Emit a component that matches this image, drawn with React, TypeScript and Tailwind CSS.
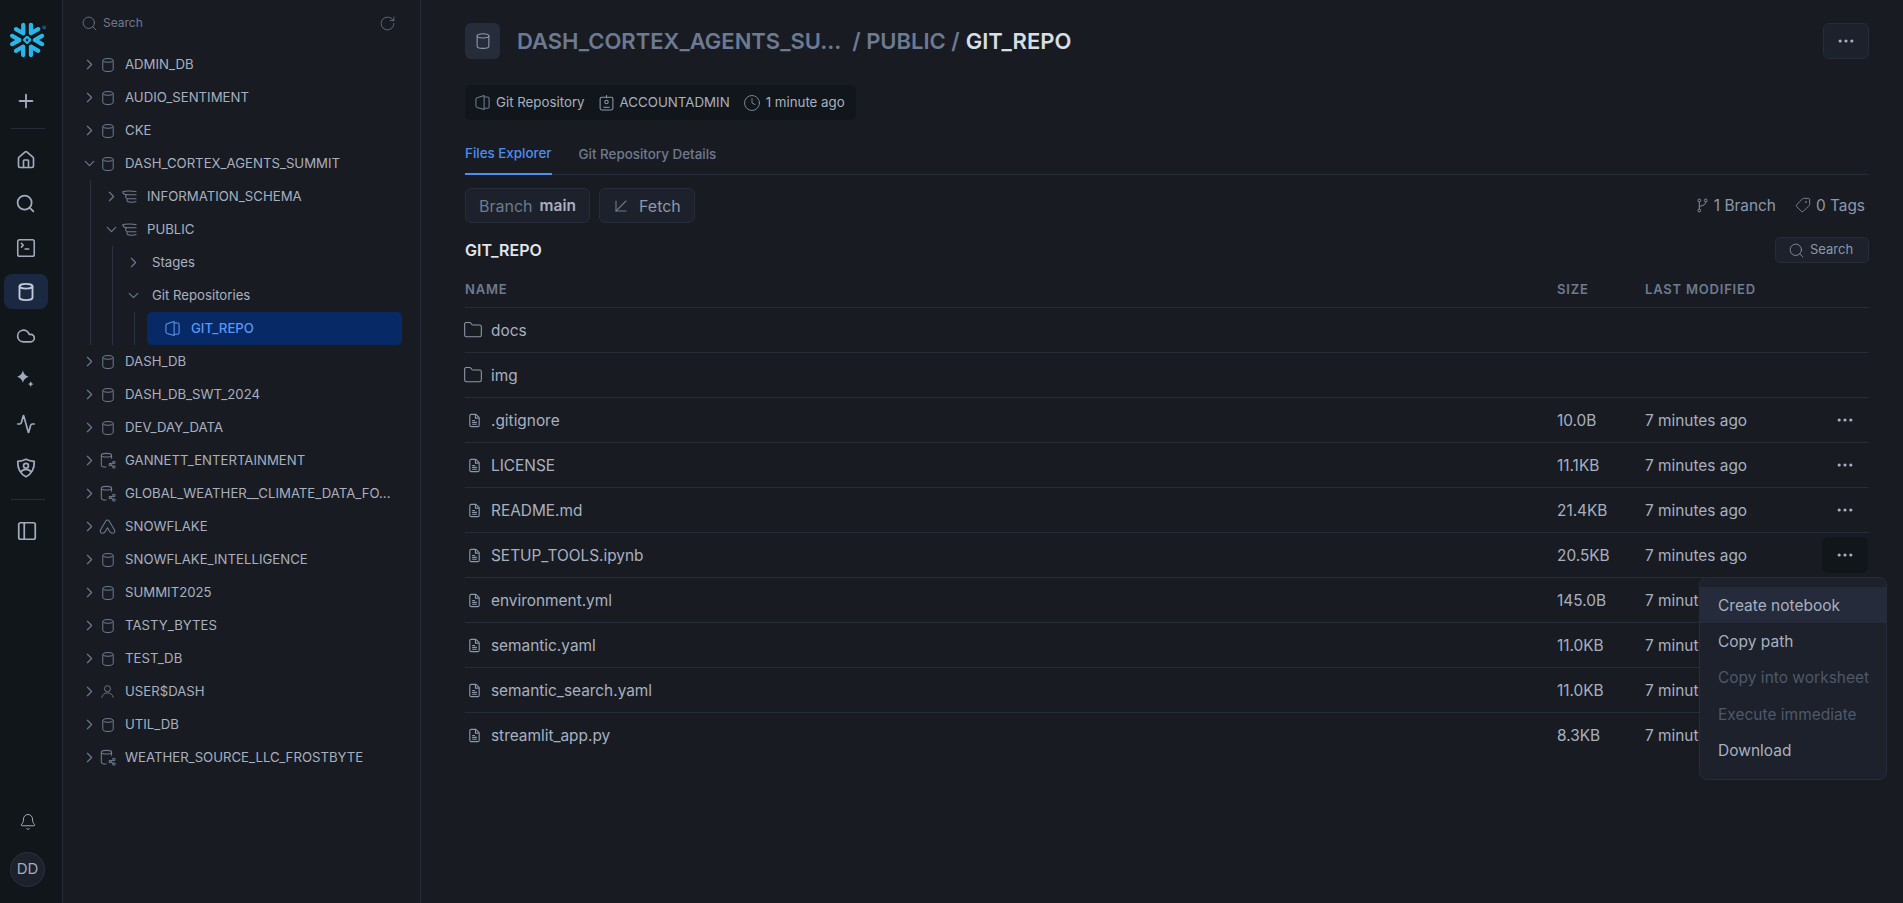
import React from "react";
import { ChevronRight, ChevronDown, Search, RotateCw, Plus, Home, SquareTerminal, Cloud, Activity, PanelLeft, Bell, Folder, Ellipsis, ArrowDownLeft, Tag, Clock } from "lucide-react";
import { SiSnowflake } from "react-icons/si";

type IP = { className?: string; strokeWidth?: number };
const Db = ({ className, strokeWidth = 1 }: IP) => (
  <svg viewBox="0 0 16 16" fill="none" stroke="currentColor" strokeWidth={strokeWidth} className={className}>
    <ellipse cx="8" cy="3.4" rx="5.2" ry="1.9" />
    <path d="M2.8 3.4v9.200c0 1.050 2.330 1.900 5.200 1.900s5.200-.85 5.200-1.900V3.400" />
  </svg>
);
const SharedDb = ({ className }: IP) => (
  <svg viewBox="0 0 16 16" fill="none" stroke="currentColor" strokeWidth="1" className={className}>
    <ellipse cx="7" cy="3" rx="4.800" ry="1.700" />
    <path d="M2.200 3v9.500c0 1 2 1.700 4.800 1.700M11.800 3v3.300" />
    <circle cx="14" cy="9.800" r="1.100" /><circle cx="10.600" cy="11.800" r="1.100" /><circle cx="14" cy="14" r="1.100" />
    <path d="M13 10.400l-1.500.9M11.500 12.400l1.500 1" />
  </svg>
);
const Schema = ({ className }: IP) => (
  <svg viewBox="0 0 16 16" fill="none" stroke="currentColor" strokeWidth="1" className={className}>
    <path d="M1.500 3.500c2-1 10-1 13 0M1.500 3.500c.3 1.600 2 2.800 3.700 2.900h9.300" />
    <path d="M5.200 6.400c-1 .9-1.200 2-.6 2.800.6.800 1.600 1 2.700 1h7.200" />
    <path d="M6.200 10.200c-1 1-.7 2.300.3 2.800 1 .5 2.400.4 3.500.4 1.700 0 3.200-.2 4.500-.6" />
  </svg>
);
const Repo = ({ className }: IP) => (
  <svg viewBox="0 0 16 16" fill="none" stroke="currentColor" strokeWidth="1" strokeLinejoin="round" className={className}>
    <path d="M9.500 1.500 3 3.600c-.8.3-1.200.8-1.200 1.500v6c0 .7.4 1.200 1.200 1.500l6.500 2.100z" />
    <path d="M9.500 2.800h3.200c.8 0 1.500.7 1.500 1.500v7.600c0 .8-.7 1.500-1.500 1.500H9.500" />
  </svg>
);
const Peak = ({ className }: IP) => (
  <svg viewBox="0 0 16 16" fill="none" stroke="currentColor" strokeWidth="1" strokeLinejoin="round" className={className}>
    <path d="M8 1.800c-.7 0-1.200.4-1.600 1L1.500 11c-1 1.700.1 3.400 1.900 3.400 1.100 0 1.900-.6 2.500-1.600L8 9.200l2.100 3.600c.6 1 1.400 1.600 2.500 1.600 1.800 0 2.900-1.700 1.900-3.400L9.600 2.800c-.4-.6-.9-1-1.600-1z" />
  </svg>
);
const Person = ({ className }: IP) => (
  <svg viewBox="0 0 16 16" fill="none" stroke="currentColor" strokeWidth="1" className={className}>
    <circle cx="8" cy="5" r="3.200" />
    <path d="M2 14.500c.3-3 2.800-5 6-5s5.700 2 6 5" />
  </svg>
);
const FileDoc = ({ className }: IP) => (
  <svg viewBox="0 0 16 16" fill="none" stroke="currentColor" strokeWidth="1.200" strokeLinejoin="round" className={className}>
    <path d="M4.500 1.500h5l3.500 3.500v8c0 .8-.7 1.500-1.500 1.500h-7c-.8 0-1.500-.7-1.500-1.500v-10c0-.8.700-1.500 1.500-1.500z" />
    <path d="M9 2v3.500h3.500M5.500 8h3M5.500 10h5M5.500 12h5" />
  </svg>
);
const Sparkles = ({ className }: IP) => (
  <svg viewBox="0 0 20 20" fill="currentColor" className={className}>
    <path d="M7.500 1.500c.9 3.300 2.300 4.800 5.500 5.800-3.200 1-4.600 2.500-5.500 5.800-.9-3.300-2.300-4.800-5.500-5.800 3.200-1 4.600-2.500 5.500-5.800z" />
    <path d="M15 11.500c.4 1.700 1.100 2.500 2.800 2.900-1.700.4-2.400 1.200-2.800 2.900-.4-1.700-1.100-2.500-2.800-2.900 1.700-.4 2.400-1.200 2.800-2.900z" />
  </svg>
);
const ShieldUser = ({ className }: IP) => (
  <svg viewBox="0 0 20 20" fill="none" stroke="currentColor" strokeWidth="1.600" strokeLinejoin="round" className={className}>
    <path d="M10 2c2.500 1.200 4.800 1.800 7.500 2 .2 5.700-1.800 11-7.500 14-5.700-3-7.700-8.300-7.500-14C5.200 3.800 7.500 3.200 10 2z" />
    <circle cx="10" cy="8" r="2.200" />
    <path d="M5 14c1-1.900 2.800-2.800 5-2.800s4 .9 5 2.800" />
  </svg>
);
const Badge = ({ className }: IP) => (
  <svg viewBox="0 0 16 16" fill="none" stroke="currentColor" strokeWidth="1" className={className}>
    <rect x="2" y="3" width="12" height="12" rx="1.500" />
    <path d="M8 1v3" />
    <circle cx="8" cy="7.500" r="1.600" />
    <path d="M5 12.500h6" />
  </svg>
);
const BranchIcon = ({ className }: IP) => (
  <svg viewBox="0 0 12 16" fill="none" stroke="currentColor" strokeWidth="1" className={className}>
    <circle cx="2.500" cy="2.500" r="1.500" /><circle cx="9.500" cy="2.500" r="1.500" /><circle cx="2.500" cy="13.500" r="1.500" />
    <path d="M2.500 4v8M9.500 4c0 3-2.500 4-7 5" />
  </svg>
);

type Row = { label: string; level: 0 | 1 | 2 | 3; open?: boolean; icon?: "db" | "shared" | "schema" | "peak" | "user" | "none"; active?: boolean };
const rows: Row[] = [
  { label: "ADMIN_DB", level: 0, icon: "db" },
  { label: "AUDIO_SENTIMENT", level: 0, icon: "db" },
  { label: "CKE", level: 0, icon: "db" },
  { label: "DASH_CORTEX_AGENTS_SUMMIT", level: 0, icon: "db", open: true },
  { label: "INFORMATION_SCHEMA", level: 1, icon: "schema" },
  { label: "PUBLIC", level: 1, icon: "schema", open: true },
  { label: "Stages", level: 2, icon: "none" },
  { label: "Git Repositories", level: 2, icon: "none", open: true },
  { label: "GIT_REPO", level: 3, active: true },
  { label: "DASH_DB", level: 0, icon: "db" },
  { label: "DASH_DB_SWT_2024", level: 0, icon: "db" },
  { label: "DEV_DAY_DATA", level: 0, icon: "db" },
  { label: "GANNETT_ENTERTAINMENT", level: 0, icon: "shared" },
  { label: "GLOBAL_WEATHER__CLIMATE_DATA_FO...", level: 0, icon: "shared" },
  { label: "SNOWFLAKE", level: 0, icon: "peak" },
  { label: "SNOWFLAKE_INTELLIGENCE", level: 0, icon: "db" },
  { label: "SUMMIT2025", level: 0, icon: "db" },
  { label: "TASTY_BYTES", level: 0, icon: "db" },
  { label: "TEST_DB", level: 0, icon: "db" },
  { label: "USER$DASH", level: 0, icon: "user" },
  { label: "UTIL_DB", level: 0, icon: "db" },
  { label: "WEATHER_SOURCE_LLC_FROSTBYTE", level: 0, icon: "shared" },
];

const TreeIcon = ({ kind }: { kind?: Row["icon"] }) => {
  const c = "w-[17px] h-[17px] shrink-0 text-[#6f7a90]";
  if (kind === "db") return <Db className="w-[16px] h-[16px] shrink-0 text-[#6f7a90]" />;
  if (kind === "shared") return <SharedDb className={c} />;
  if (kind === "schema") return <Schema className={c} />;
  if (kind === "peak") return <Peak className={c} />;
  if (kind === "user") return <Person className="w-[15px] h-[15px] shrink-0 text-[#6f7a90]" />;
  return null;
};

const TreeRow = ({ r }: { r: Row }) => {
  if (r.active) {
    return (
      <div className="h-[33px] ml-[84px] mr-[18px] pl-[17px] flex items-center gap-[10px] rounded-[5px] bg-[#072a66] text-[#5b96f5] font-medium">
        <Repo className="w-[17px] h-[17px] shrink-0" />
        <span>{r.label}</span>
      </div>
    );
  }
  const indent = r.level === 0 ? "pl-[18px]" : r.level === 1 ? "pl-[40px]" : "pl-[62px]";
  const Chevron = r.open ? ChevronDown : ChevronRight;
  return (
    <div className={`h-[33px] flex items-center ${indent} whitespace-nowrap`}>
      <Chevron className="w-[17px] h-[17px] shrink-0 text-[#6f7a90]" strokeWidth={1.6} />
      {r.icon === "none"
        ? <span className="w-[10px] shrink-0" />
        : <span className="w-[17px] ml-[1px] mr-[9px] flex justify-center shrink-0"><TreeIcon kind={r.icon} /></span>}
      <span>{r.label}</span>
    </div>
  );
};

const files = [
  { name: "docs", dir: true },
  { name: "img", dir: true },
  { name: ".gitignore", size: "10.0B" },
  { name: "LICENSE", size: "11.1KB" },
  { name: "README.md", size: "21.4KB" },
  { name: "SETUP_TOOLS.ipynb", size: "20.5KB", hot: true },
  { name: "environment.yml", size: "145.0B" },
  { name: "semantic.yaml", size: "11.0KB" },
  { name: "semantic_search.yaml", size: "11.0KB" },
  { name: "streamlit_app.py", size: "8.3KB" },
];

const RailBtn = ({ children, active }: { children: React.ReactNode; active?: boolean }) => (
  <div className={`w-[44px] h-[35px] ml-[4px] mb-[9px] pr-[1px] rounded-[8px] flex items-center justify-center text-[#a2abbd] ${active ? "bg-[#1b2842] text-[#c2c9d6]" : ""}`}>{children}</div>
);

export default function App() {
  return (
    <div className="flex h-[903px] w-[1903px] overflow-hidden bg-[#181c22] font-['Inter','Liberation_Sans',sans-serif] text-[#a8b0c0]">
      {/* rail */}
      <aside className="w-[63px] shrink-0 bg-[#11161b] border-r border-[#262c3a] flex flex-col pt-[22px]">
        <SiSnowflake className="w-[36px] h-[36px] ml-[10px] text-[#29b5e8]" />
        <Plus className="w-[22px] h-[22px] ml-[15px] mt-[32px] text-[#a2abbd]" strokeWidth={2} />
        <div className="w-[34px] h-px bg-[#262c3a] ml-[11px] mt-[16px] mb-[13px]" />
        <RailBtn><Home className="w-[20px] h-[20px]" strokeWidth={2} /></RailBtn>
        <RailBtn><Search className="w-[21px] h-[21px]" strokeWidth={2} /></RailBtn>
        <RailBtn><SquareTerminal className="w-[22px] h-[22px]" strokeWidth={1.7} /></RailBtn>
        <RailBtn active><Db className="w-[20px] h-[20px]" strokeWidth={1.5} /></RailBtn>
        <RailBtn><Cloud className="w-[20px] h-[20px]" strokeWidth={2} /></RailBtn>
        <RailBtn><Sparkles className="w-[21px] h-[21px]" /></RailBtn>
        <RailBtn><Activity className="w-[20px] h-[20px]" strokeWidth={2} /></RailBtn>
        <RailBtn><ShieldUser className="w-[22px] h-[22px]" /></RailBtn>
        <div className="w-[34px] h-px bg-[#262c3a] ml-[11px] mt-[5px] mb-[20px]" />
        <PanelLeft className="w-[22px] h-[22px] ml-[16px] text-[#a2abbd]" strokeWidth={1.9} />
        <div className="mt-auto mb-[16px] flex flex-col items-start">
          <Bell className="w-[18px] h-[18px] ml-[19px] text-[#a2abbd] mb-[21px]" strokeWidth={1.3} />
          <div className="w-[35px] h-[35px] ml-[10px] rounded-full bg-[#1c212b] border border-[#2a3140] flex items-center justify-center text-[15px] text-[#a2abbd]">DD</div>
        </div>
      </aside>

      {/* tree */}
      <nav className="w-[358px] shrink-0 border-r border-[#262c3a] text-[13.2px] relative pt-[10px]">
        <div className="h-[26px] pl-[18px] pr-[24px] mb-[12px] flex items-center text-[#6f7a90] text-[12px]">
          <Search className="w-[17px] h-[17px] mr-[5px]" strokeWidth={1.2} />
          <span>Search</span>
          <RotateCw className="w-[17px] h-[17px] ml-auto" strokeWidth={1.1} />
        </div>
        <div className="relative">
          {rows.map((r) => <TreeRow key={r.label} r={r} />)}
          <div className="absolute left-[27px] top-[132px] h-[165px] w-px bg-[#2a3140]" />
          <div className="absolute left-[49px] top-[198px] h-[99px] w-px bg-[#2a3140]" />
          <div className="absolute left-[71px] top-[264px] h-[33px] w-px bg-[#2a3140]" />
        </div>
      </nav>

      {/* main */}
      <main className="flex-1 min-w-0 pl-[44px] pr-[34px] pt-[23px] relative">
        <div className="h-[36px] flex items-center">
          <div className="w-[35px] h-[36px] rounded-[6px] bg-[#262c3a] flex items-center justify-center shrink-0">
            <Db className="w-[18px] h-[18px] text-[#8d97aa]" />
          </div>
          <div className="ml-[17px] text-[22px] font-semibold text-[#6d7a92] flex items-center whitespace-nowrap">
            <span>DASH_CORTEX_AGENTS_SU...</span>
            <span className="ml-[11px]">/ PUBLIC /</span>
            <span className="ml-[6px] text-[#d9dde5]">GIT_REPO</span>
          </div>
          <div className="ml-auto w-[46px] h-[36px] rounded-[6px] bg-[#1c212b] border border-[#262c3a] flex items-center justify-center text-[#a8b0c0]">
            <Ellipsis className="w-[20px] h-[20px]" strokeWidth={1.800} />
          </div>
        </div>

        <div className="mt-[26px] w-[391px] h-[35px] rounded-[6px] bg-[#11161b] flex items-center pl-[9px] text-[13.300px] whitespace-nowrap">
          <Repo className="w-[17px] h-[17px] text-[#6f7a90] mr-[5px] shrink-0" />
          <span>Git Repository</span>
          <Badge className="w-[17px] h-[17px] text-[#8d97aa] ml-[13px] mr-[5px] shrink-0" />
          <span>ACCOUNTADMIN</span>
          <Clock className="w-[18px] h-[18px] text-[#8d97aa] ml-[13px] mr-[5px] shrink-0" strokeWidth={1.1} />
          <span>1 minute ago</span>
        </div>

        <div className="mt-[17px] h-[38px] border-b border-[#262c3a] flex text-[13.4px] font-medium">
          <div className="h-[38px] border-b-2 border-[#4d8ef0] text-[#4d8ef0] flex items-center pb-[4px]">Files Explorer</div>
          <div className="ml-[27px] h-[38px] flex items-center pb-[4px] text-[#6f7a90]">Git Repository Details</div>
        </div>

        <div className="mt-[13px] h-[35px] flex items-center text-[16px]">
          <div className="h-[35px] w-[125px] rounded-[6px] bg-[#1c212b] border border-[#262c3a] flex items-center pl-[13px]">
            <span className="text-[#6f7a90]">Branch</span>
            <span className="ml-[7px] text-[15.500px] font-semibold text-[#a8b0c0]">main</span>
          </div>
          <div className="ml-[9px] h-[35px] w-[96px] rounded-[6px] bg-[#1c212b] border border-[#262c3a] flex items-center pl-[9px] text-[#8d97aa]">
            <ArrowDownLeft className="w-[24px] h-[24px] mr-[6px] text-[#6f7a90]" strokeWidth={1.100} />
            <span>Fetch</span>
          </div>
          <div className="ml-auto flex items-center pr-[4px] text-[#8d97aa] text-[15.400px]">
            <BranchIcon className="w-[11px] h-[15px] mr-[6px]" />
            <span>1 Branch</span>
            <Tag className="w-[16px] h-[16px] ml-[19px] mr-[5px] -scale-x-100" strokeWidth={1.200} />
            <span>0 Tags</span>
          </div>
        </div>

        <div className="mt-[14px] h-[26px] flex items-center">
          <span className="text-[16px] font-semibold text-[#e1e4ea]">GIT_REPO</span>
          <div className="ml-auto w-[94px] h-[26px] rounded-[5px] bg-[#1c212b] border border-[#262c3a] flex items-center pl-[12px] text-[13px] text-[#8d97aa]">
            <Search className="w-[17px] h-[17px] mr-[5px]" strokeWidth={1.200} />
            <span>Search</span>
          </div>
        </div>

        <div className="mt-[9px] h-[36px] flex items-center text-[13px] font-semibold tracking-[0.8px] text-[#6f7a90] border-b border-[#262c3a]">
          <span className="w-[1092px]">NAME</span>
          <span className="w-[88px]">SIZE</span>
          <span>LAST MODIFIED</span>
        </div>

        {files.map((f, i) => (
          <div key={f.name} className={`h-[45px] flex items-center text-[15.400px] border-b ${i < files.length - 1 ? "border-[#262c3a]" : "border-transparent"}`}>
            <span className="w-[26px] flex shrink-0">
              {f.dir
                ? <Folder className="w-[20px] h-[20px] -ml-[2px] text-[#8d97aa]" strokeWidth={1.300} />
                : <FileDoc className="w-[15px] h-[15px] ml-[1.500px] text-[#8d97aa]" />}
            </span>
            <span className="w-[1066px] pt-[1px] text-[#a8b0c0]">{f.name}</span>
            {f.size && <span className="w-[88px] pt-[1px]">{f.size}</span>}
            {f.size && <span className="pt-[1px]">7 minutes ago</span>}
            {f.size && (
              <div className={`ml-auto mr-[1px] w-[46px] h-[36px] rounded-[6px] flex items-center justify-center text-[#a8b0c0] ${f.hot ? "bg-[#11161b]" : ""}`}>
                <Ellipsis className="w-[20px] h-[20px]" strokeWidth={1.800} />
              </div>
            )}
          </div>
        ))}

        <div className="absolute left-[1278px] top-[577px] w-[188px] h-[203px] rounded-[8px] bg-[#1c212b] border border-[#262c3a] py-[9px] text-[15.500px] text-[#a8b0c0] whitespace-nowrap">
          <div className="h-[36px] px-[18px] pt-[1px] flex items-center bg-[#252b3a]">Create notebook</div>
          <div className="h-[36px] px-[18px] pt-[1px] flex items-center">Copy path</div>
          <div className="h-[37px] px-[18px] pt-[1px] flex items-center text-[#4f586a]">Copy into worksheet</div>
          <div className="h-[36px] px-[18px] pt-[1px] flex items-center text-[#4f586a]">Execute immediate</div>
          <div className="h-[37px] px-[18px] pt-[1px] flex items-center">Download</div>
        </div>
      </main>
    </div>
  );
}
